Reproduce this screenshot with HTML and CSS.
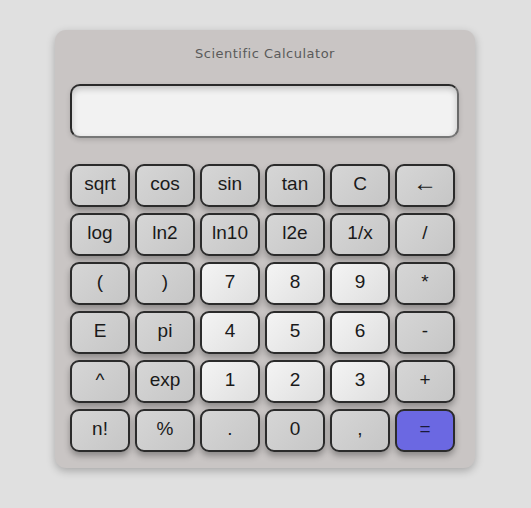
FILE: index.html
```html
<!DOCTYPE html>
<html>
<head>
<meta charset="utf-8">
<link rel="stylesheet" href="styles.css">
</head>
<body>
<div class="calc">
  <div class="title">Scientific Calculator</div>
  <div class="display"></div>
  <div class="keys">
    <button class="key fn">sqrt</button>
    <button class="key fn">cos</button>
    <button class="key fn">sin</button>
    <button class="key fn">tan</button>
    <button class="key fn">C</button>
    <button class="key fn arrow">←</button>
    <button class="key fn">log</button>
    <button class="key fn">ln2</button>
    <button class="key fn">ln10</button>
    <button class="key fn">l2e</button>
    <button class="key fn">1/x</button>
    <button class="key fn">/</button>
    <button class="key fn">(</button>
    <button class="key fn">)</button>
    <button class="key num">7</button>
    <button class="key num">8</button>
    <button class="key num">9</button>
    <button class="key fn">*</button>
    <button class="key fn">E</button>
    <button class="key fn">pi</button>
    <button class="key num">4</button>
    <button class="key num">5</button>
    <button class="key num">6</button>
    <button class="key fn">-</button>
    <button class="key fn">^</button>
    <button class="key fn">exp</button>
    <button class="key num">1</button>
    <button class="key num">2</button>
    <button class="key num">3</button>
    <button class="key fn">+</button>
    <button class="key fn">n!</button>
    <button class="key fn">%</button>
    <button class="key fn">.</button>
    <button class="key fn">0</button>
    <button class="key fn">,</button>
    <button class="key eq">=</button>
  </div>
</div>
</body>
</html>
```
FILE: styles.css
```css
html, body {
  margin: 0;
  padding: 0;
}
body {
  background: #e0e0e0;
  width: 531px;
  height: 508px;
  font-family: "Liberation Sans", Arial, sans-serif;
}
.calc {
  box-sizing: border-box;
  width: 420px;
  margin: 30px 0 0 55px;
  padding: 14px 15px 16px 15px;
  background: #c9c5c4;
  border-radius: 11px;
  box-shadow: 0 3px 8px rgba(0,0,0,0.25);
}
.title {
  text-align: center;
  font-family: "DejaVu Sans", sans-serif;
  font-size: 13px;
  letter-spacing: 0.5px;
  color: #5a5a5a;
  height: 20px;
  line-height: 20px;
}
.display {
  box-sizing: border-box;
  margin-top: 20px;
  width: 389px;
  height: 54px;
  background: #f2f2f2;
  border: 2px solid #2a2a2a;
  border-right-color: #6a6a6a;
  border-bottom-color: #777;
  border-radius: 10px;
  box-shadow: inset 0 3px 6px rgba(0,0,0,0.2), 0 2px 5px rgba(0,0,0,0.15);
}
.keys {
  margin-top: 26px;
  display: grid;
  grid-template-columns: repeat(6, 60px);
  grid-auto-rows: 43px;
  column-gap: 5px;
  row-gap: 6px;
}
.key {
  box-sizing: border-box;
  margin: 0;
  padding: 0 0 3px 0;
  border: 2px solid #2b2b2b;
  border-radius: 9px;
  font-family: "Liberation Sans", Arial, sans-serif;
  font-size: 19px;
  color: #1a1a1a;
  box-shadow: 0 4px 6px rgba(0,0,0,0.3);
}
.arrow {
  font-size: 24px;
  padding-bottom: 5px;
}
.fn {
  background: linear-gradient(135deg, #d6d6d6, #c6c6c6);
}
.num {
  background: linear-gradient(135deg, #f4f4f4, #dedede);
}
.eq {
  background: #6b68e2;
  color: #1a1a3a;
}
```
